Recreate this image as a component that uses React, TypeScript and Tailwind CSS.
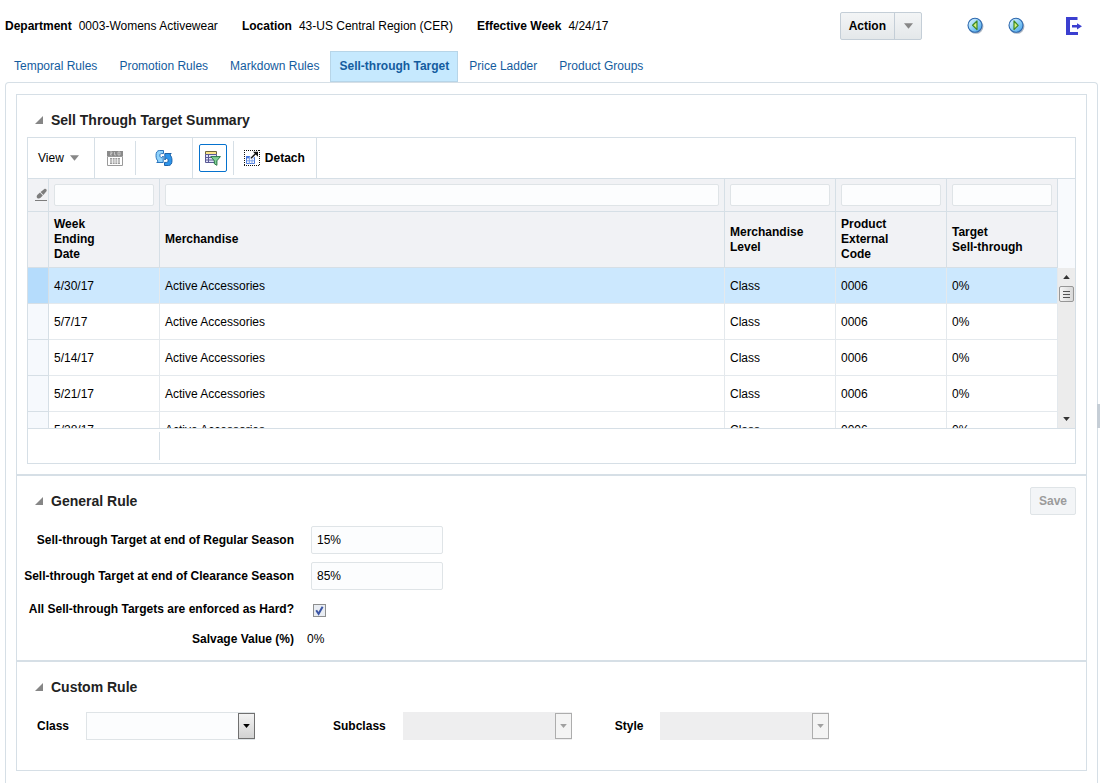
import React, { useState } from 'react';

const tabs = [
  'Temporal Rules',
  'Promotion Rules',
  'Markdown Rules',
  'Sell-through Target',
  'Price Ladder',
  'Product Groups',
];

const columns = [
  'Week\nEnding\nDate',
  'Merchandise',
  'Merchandise\nLevel',
  'Product\nExternal\nCode',
  'Target\nSell-through',
];

const rows = ['4/30/17', '5/7/17', '5/14/17', '5/21/17', '5/28/17'].map((week) => ({
  week,
  merchandise: 'Active Accessories',
  level: 'Class',
  code: '0006',
  target: '0%',
}));

const ArrowDown = ({ className }: { className?: string }) => (
  <svg viewBox="0 0 10 6" className={className} fill="currentColor" aria-hidden="true">
    <path d="M0 0h10L5 6z" />
  </svg>
);

const PrevNextIcon = ({ next }: { next?: boolean }) => (
  <svg viewBox="0 0 18 18" className="w-[18px] h-[18px]" aria-hidden="true">
    <defs>
      <linearGradient id={next ? 'ballNext' : 'ballPrev'} x1="0" y1="0" x2="1" y2="1">
        <stop offset="0" stopColor="#eaf8ff" />
        <stop offset="0.5" stopColor="#8fd0f8" />
        <stop offset="1" stopColor="#3f9de8" />
      </linearGradient>
    </defs>
    <circle cx="9" cy="9.4" r="7.4" fill="#8a97a8" opacity="0.7" />
    <circle cx="8" cy="8.3" r="7" fill={next ? 'url(#ballNext)' : 'url(#ballPrev)'} stroke="#2d68ae" strokeWidth="1.1" />
    <path
      d={next ? 'M6 4v8.6l4.2-4.3z' : 'M10 4v8.6L5.6 8.3z'}
      fill="#d6f07a"
      stroke="#3f8a26"
      strokeWidth="1.2"
      strokeLinejoin="round"
    />
  </svg>
);

const ExitIcon = () => (
  <svg viewBox="0 0 16 18" className="w-4 h-[18px]" fill="#3b3fd0" aria-hidden="true">
    <path d="M0 0h11.5v3H4v12h8v3H0z" />
    <path d="M6 8h5V6.2L16 9.3l-5 3.1v-1.8H6z" />
  </svg>
);

const CalendarIcon = () => (
  <svg viewBox="0 0 16 16" className="w-4 h-4" aria-hidden="true">
    <path d="M0 1h16v5H0z" fill="#8a8a8a" />
    <path d="M3 2h2v1.5H3.5V5H5M7.5 2v3H9M11 2h2v3h-2z" fill="none" stroke="#d8d8d8" strokeWidth="0.7" />
    <path d="M0.5 6.5h15v9H0.5z" fill="#fff" stroke="#9a9a9a" />
    <path d="M3 8h10v6H3z" fill="#9a9a9a" />
    <path d="M5.5 8v6M8 8v6M10.5 8v6M3 10h10M3 12h10" stroke="#fff" strokeWidth="0.7" />
  </svg>
);

const RefreshIcon = () => (
  <svg viewBox="0 0 18 18" className="w-[18px] h-[18px]" strokeLinejoin="round" strokeWidth="0.9" aria-hidden="true">
    <path
      d="M8.5 1.5H4.5C2 1.5 1 3.6 1 6.5c0 2.6.7 4.3 2 5.6l-1.2 1.4h6.4V7L6.4 8.8C5.4 8.2 4.8 7.5 4.9 6.2 5 5 5.6 4.6 6.6 4.6h1.9z"
      fill="#8fd2fb"
      stroke="#1767b5"
    />
    <path
      d="M9.5 16.5h4c2.5 0 3.5-2.1 3.5-5 0-2.6-.7-4.3-2-5.6l1.2-1.4H9.8V11l1.8-1.8c1 .6 1.6 1.3 1.5 2.6-.1 1.2-.7 1.6-1.7 1.6H9.5z"
      fill="#2d94ea"
      stroke="#11579f"
    />
  </svg>
);

const FilterIcon = () => (
  <svg viewBox="0 0 16 16" className="w-4 h-4" aria-hidden="true">
    <path d="M0.5 1.5h11v3H0.5z" fill="#fbe58a" stroke="#6c6640" />
    <path d="M0.5 4.5h11v8H0.5z" fill="#e3e3fb" stroke="#5a5a94" />
    <path d="M0.5 7.5h11M0.5 10h11M3.5 4.5v8" stroke="#5a5a94" />
    <path d="M5.8 6.6h9.6l-3.5 4.2v4.5l-2.6-1.6v-2.9z" fill="#7fcf96" stroke="#2b7746" strokeLinejoin="round" />
  </svg>
);

const DetachIcon = () => (
  <svg viewBox="0 0 16 16" className="w-4 h-4" aria-hidden="true">
    <path
      d="M0 0.5h16M0 15.5h16M0.5 0v16M15.5 0v16"
      fill="none"
      stroke="#111"
      strokeDasharray="1 1"
      shapeRendering="crispEdges"
    />
    <path d="M2.5 6.5h8v7h-8z" fill="#fff" stroke="#4a7ade" />
    <path d="M2 6h9v2.4H2z" fill="#4a7ade" />
    <path d="M5.3 8v6M8 8v6M2.5 10.8h8" stroke="#7aa0ea" />
    <path d="M6.5 8.5l5-5" stroke="#fff" strokeWidth="3.4" />
    <path d="M7 8.2l5-5" stroke="#111" strokeWidth="1.4" />
    <path d="M9 1.8h5v5z" fill="#111" />
  </svg>
);

const EraserIcon = () => (
  <svg viewBox="0 0 13 14" className="w-[13px] h-[14px]" fill="#7d7d7d" aria-hidden="true">
    <path d="M5.6 4L9.4.9c1.5-.5 2.7.6 2.2 2.2L8.4 7z" />
    <path d="M5 4.6l2.8 3-2.2 2.2c-1.2.9-2.5.9-3.4.1-.8-.9-.7-2 .3-3.1z" />
    <path d="M0 12h12v1H0z" />
  </svg>
);

const SectionTitle = ({ children }: { children: React.ReactNode }) => (
  <h2 className="flex items-center gap-2 pl-2 text-sm leading-5 font-bold text-[#222]">
    <svg viewBox="0 0 8 8" className="w-2 h-2" fill="#868686" aria-hidden="true">
      <path d="M8 0v8H0z" />
    </svg>
    {children}
  </h2>
);

const HeaderField = ({ label, value }: { label: string; value: string }) => (
  <div className="flex gap-[7px]">
    <span className="font-bold">{label}</span>
    <span>{value}</span>
  </div>
);

const SelectField = ({ id, label, disabled }: { id: string; label: string; disabled?: boolean }) => (
  <div className="flex items-center gap-[17px]">
    <label htmlFor={id} className="font-bold">
      {label}
    </label>
    <div className="relative">
      <select
        id={id}
        disabled={disabled}
        className="block appearance-none w-[169px] h-7 px-2 border border-[#dfe4e7] bg-[#fcfdfe] disabled:border-[#eeeeef] disabled:bg-[#eeeeef] disabled:opacity-100"
      >
        <option value=""></option>
      </select>
      <span
        className={
          disabled
            ? 'pointer-events-none absolute right-0 inset-y-px w-[17px] flex items-center justify-center border border-[#adadad] bg-[#f4f4f4] text-[#a0a0a0]'
            : 'pointer-events-none absolute right-0 inset-y-px w-[17px] flex items-center justify-center border border-[#707070] bg-linear-to-b from-[#f3f3f3] to-[#d2d2d2] text-black'
        }
      >
        <ArrowDown className="w-[7px] h-1" />
      </span>
    </div>
  </div>
);

const Columns = () => (
  <colgroup>
    <col className="w-[21px]" />
    <col className="w-[111px]" />
    <col />
    <col className="w-[111px]" />
    <col className="w-[111px]" />
    <col className="w-[111px]" />
  </colgroup>
);

const App = () => {
  const [selected, setSelected] = useState(0);
  const [regular, setRegular] = useState('15%');
  const [clearance, setClearance] = useState('85%');
  const [hard, setHard] = useState(true);

  return (
    <div className="min-h-screen flex flex-col bg-white text-black text-xs leading-[15px] font-['Liberation_Sans',Arial,sans-serif]">
      {/* Context bar */}
      <header className="flex items-center justify-between pt-3 pl-[5px] pr-[18px]">
        <div className="flex gap-6">
          <HeaderField label="Department" value="0003-Womens Activewear" />
          <HeaderField label="Location" value="43-US Central Region (CER)" />
          <HeaderField label="Effective Week" value="4/24/17" />
        </div>
        <div className="flex items-center">
          <div className="flex h-7 border border-[#c4ced7] rounded-xs bg-linear-to-b from-[#f3f5f6] to-[#e4e8ea]">
            <button className="px-2 font-bold">Action</button>
            <button aria-label="Action menu" className="w-[27px] flex items-center justify-center border-l border-[#c4ced7] text-[#878787]">
              <ArrowDown className="w-[9px] h-[6px]" />
            </button>
          </div>
          <button aria-label="Previous" className="ml-[45px]">
            <PrevNextIcon />
          </button>
          <button aria-label="Next" className="ml-[23px]">
            <PrevNextIcon next />
          </button>
          <button aria-label="Exit" className="ml-10">
            <ExitIcon />
          </button>
        </div>
      </header>

      {/* Tabs */}
      <nav className="flex mt-[11px] pl-[3px]">
        {tabs.map((tab) => (
          <a
            key={tab}
            href="#"
            className={
              tab === 'Sell-through Target'
                ? 'px-2 py-[7px] border border-[#b7d5e8] bg-[#c6e9fe] font-bold text-[#145c9e]'
                : 'px-[10px] py-[7px] border border-transparent text-[#145c9e]'
            }
          >
            {tab}
          </a>
        ))}
      </nav>

      <main className="relative flex-1 ml-[5px] mr-[2px] px-[10px] pt-[11px] pb-3 border border-b-0 border-[#d6dfe6] rounded-t">
        <div className="absolute -right-[3px] top-[321px] w-[3px] h-6 bg-[#c6ced6]" />

        <div className="border border-[#d6dfe6]">
          {/* Summary */}
          <section className="px-[10px] pt-[15px] pb-[10px]">
            <SectionTitle>Sell Through Target Summary</SectionTitle>

            <div className="mt-[7px] border border-[#d6dfe6]">
              <div className="flex h-10">
                <button className="flex items-center gap-[6px] pl-[10px] pr-[15px] border-r border-[#d6dfe6]">
                  View
                  <ArrowDown className="w-[9px] h-[6px] text-[#878787]" />
                </button>
                <button aria-label="Calendar" disabled className="my-[3px] px-3 border-r border-[#d6dfe6]">
                  <CalendarIcon />
                </button>
                <button aria-label="Refresh" className="px-[19px] border-r border-[#d6dfe6]">
                  <RefreshIcon />
                </button>
                <div className="my-[3px] px-[6px] flex items-center border-r border-[#d6dfe6]">
                  <button
                    aria-label="Query by example"
                    aria-pressed="true"
                    className="w-7 h-7 flex items-center justify-center border border-[#0572ce] rounded-xs"
                  >
                    <FilterIcon />
                  </button>
                </div>
                <button className="flex items-center gap-[5px] pl-[10px] pr-[11px] border-r border-[#d6dfe6] font-bold">
                  <DetachIcon />
                  Detach
                </button>
              </div>

              <div className="pr-[17px] bg-[#f8fafd] border-t border-[#d6dfe6]">
                <table className="table-fixed w-full bg-[#f1f2f5] border-separate border-spacing-0">
                  <Columns />
                  <thead>
                    <tr className="h-[33px]">
                      <td className="border-r border-b border-[#d6dfe6] pl-[7px]">
                        <button aria-label="Clear filters" className="block">
                          <EraserIcon />
                        </button>
                      </td>
                      {columns.map((column) => (
                        <td key={column} className="border-r border-b border-[#d6dfe6] px-[5px]">
                          <input
                            aria-label={`Filter ${column}`}
                            className="block w-full h-[22px] px-1 border border-[#dfe4e7] rounded-xs bg-[#fcfdfe]"
                          />
                        </td>
                      ))}
                    </tr>
                    <tr className="h-14">
                      <th className="border-r border-b border-[#d6dfe6]" />
                      {columns.map((column) => (
                        <th
                          key={column}
                          className="border-r border-b border-[#d6dfe6] pl-[5px] text-left font-bold whitespace-pre-line"
                        >
                          {column}
                        </th>
                      ))}
                    </tr>
                  </thead>
                </table>
              </div>

              <div className="flex h-[161px] border-b border-[#d6dfe6]">
                <div className="flex-1 overflow-y-auto [scrollbar-width:none]">
                  <table className="table-fixed w-full border-separate border-spacing-0">
                    <Columns />
                    <tbody>
                      {rows.map((row, index) => (
                        <tr
                          key={row.week}
                          onClick={() => setSelected(index)}
                          className={index === selected ? 'h-9 bg-[#cce8fe]' : 'h-9'}
                        >
                          <td
                            className={
                              index === selected
                                ? 'border-r border-b border-[#d6dfe6] bg-[#b5dcfc]'
                                : 'border-r border-b border-[#d6dfe6] bg-[#f6f9fd]'
                            }
                          />
                          {[row.week, row.merchandise, row.level, row.code, row.target].map((value, i) => (
                            <td key={i} className="border-r border-b border-[#e4e9ed] pt-[2px] pl-[5px]">
                              {value}
                            </td>
                          ))}
                        </tr>
                      ))}
                    </tbody>
                  </table>
                </div>
                <div className="w-[17px] flex flex-col items-center bg-[#ececec]">
                  <span className="h-[18px] flex items-center text-[#333]">
                    <ArrowDown className="w-[7px] h-1 rotate-180" />
                  </span>
                  <span className="w-[15px] h-4 flex flex-col items-center justify-center gap-px border border-[#979797] rounded-xs bg-linear-to-r from-[#f5f5f5] to-[#d8d8d8]">
                    <span className="w-[7px] h-px bg-[#555]" />
                    <span className="w-[7px] h-px mt-px bg-[#555]" />
                    <span className="w-[7px] h-px mt-px bg-[#555]" />
                  </span>
                  <span className="mt-auto h-[18px] flex items-center text-[#333]">
                    <ArrowDown className="w-[7px] h-1" />
                  </span>
                </div>
              </div>

              <div className="h-[34px] py-[3px]">
                <div className="w-[132px] h-full border-r border-[#d6dfe6]" />
              </div>
            </div>
          </section>

          {/* General rule */}
          <section className="px-[10px] pt-[11px] pb-[13px] border-t-2 border-[#d6dfe6]">
            <div className="flex items-center justify-between">
              <SectionTitle>General Rule</SectionTitle>
              <button disabled className="h-7 px-2 border border-[#dfe4e7] rounded-xs bg-[#f3f5f7] font-bold text-[#9b9b9b]">
                Save
              </button>
            </div>

            <div className="-ml-2 mt-[11px] grid grid-cols-[275px_auto] justify-start items-center gap-x-[17px]">
              <label htmlFor="regular" className="text-right font-bold">
                Sell-through Target at end of Regular Season
              </label>
              <input
                id="regular"
                value={regular}
                onChange={(e) => setRegular(e.target.value)}
                className="w-[132px] h-7 px-[5px] border border-[#dfe4e7] rounded-xs bg-[#fcfdfe]"
              />
              <label htmlFor="clearance" className="mt-2 text-right font-bold">
                Sell-through Target at end of Clearance Season
              </label>
              <input
                id="clearance"
                value={clearance}
                onChange={(e) => setClearance(e.target.value)}
                className="mt-2 w-[132px] h-7 px-[5px] border border-[#dfe4e7] rounded-xs bg-[#fcfdfe]"
              />
              <label htmlFor="hard" className="mt-3 text-right font-bold">
                All Sell-through Targets are enforced as Hard?
              </label>
              <div className="relative mt-[14px] ml-[2px] w-[13px] h-[13px]">
                <input
                  id="hard"
                  type="checkbox"
                  checked={hard}
                  onChange={(e) => setHard(e.target.checked)}
                  className="block appearance-none w-[13px] h-[13px] border border-[#8e8f8f] bg-[#e9edf3]"
                />
                {hard && (
                  <svg viewBox="0 0 13 13" className="pointer-events-none absolute inset-0" fill="none" aria-hidden="true">
                    <path d="M3.2 6.2l2.4 3.6 4-7" stroke="#3b55a5" strokeWidth="2" />
                  </svg>
                )}
              </div>
              <span className="mt-[15px] text-right font-bold">Salvage Value (%)</span>
              <span className="mt-[15px] -ml-1">0%</span>
            </div>
          </section>

          {/* Custom rule */}
          <section className="px-[10px] pt-[15px] pb-[30px] border-t-2 border-[#d6dfe6]">
            <SectionTitle>Custom Rule</SectionTitle>
            <div className="mt-[15px] pl-[10px] flex">
              <SelectField id="class" label="Class" />
              <div className="ml-[78px]">
                <SelectField id="subclass" label="Subclass" disabled />
              </div>
              <div className="ml-[43px]">
                <SelectField id="style" label="Style" disabled />
              </div>
            </div>
          </section>
        </div>
      </main>
    </div>
  );
};

export default App;
